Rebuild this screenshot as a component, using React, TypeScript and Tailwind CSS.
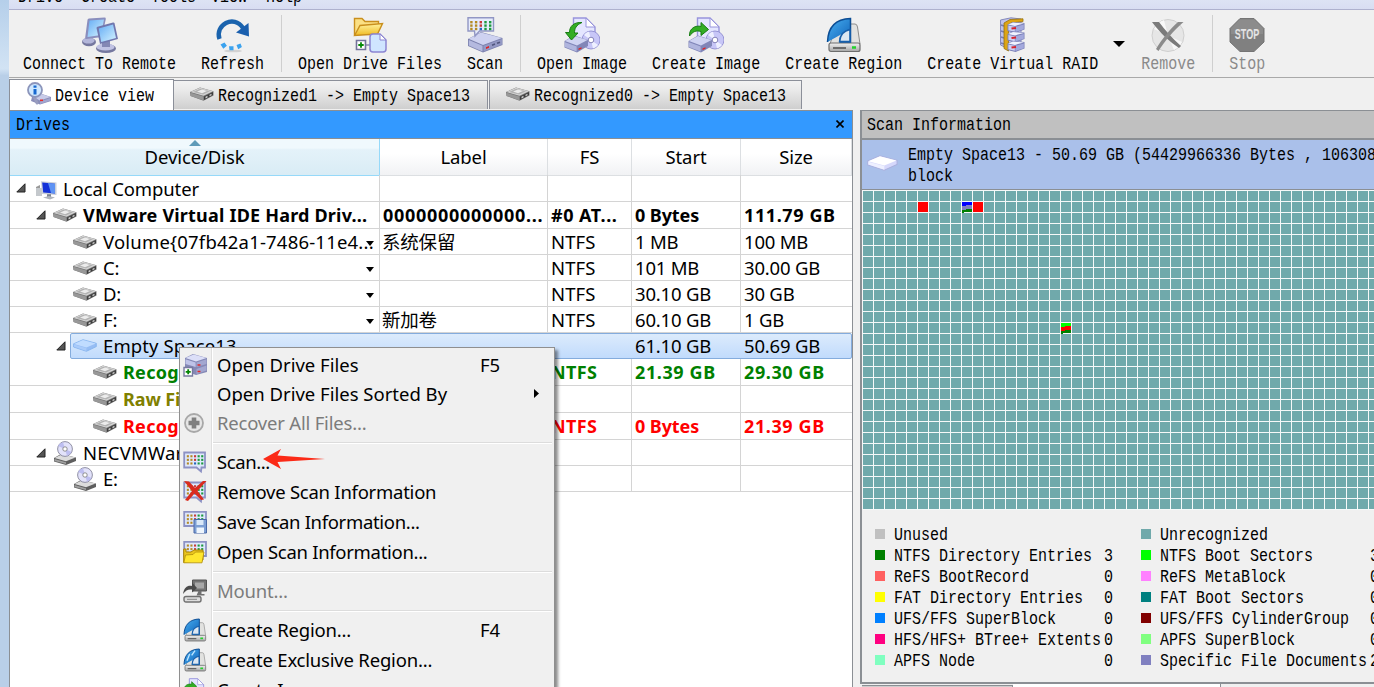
import React from "react";

type IconProps = { className?: string };

const ui = "font-['Noto_Sans','Noto_Sans_CJK_SC',sans-serif]";

function Mono({ children, className = "" }: { children: React.ReactNode; className?: string }) {
  return (
    <span
      className={`inline-block origin-center translate-y-px scale-y-[1.18] whitespace-pre font-['Liberation_Mono','Noto_Sans_CJK_SC',monospace] text-[15px] leading-[21px] ${className}`}
    >
      {children}
    </span>
  );
}

/* ---------- icons ---------- */

function Defs() {
  return (
    <svg className="absolute h-0 w-0" aria-hidden="true">
      <defs>
        <linearGradient id="screen" x1="0" y1="0" x2="1" y2="1">
          <stop offset="0" stopColor="#66adf5" />
          <stop offset="1" stopColor="#d5f3ff" />
        </linearGradient>
        <linearGradient id="gold" x1="0" y1="0" x2="0" y2="1">
          <stop offset="0" stopColor="#fff3a0" />
          <stop offset="1" stopColor="#f0bb22" />
        </linearGradient>
        <linearGradient id="azure" x1="0" y1="0" x2="1" y2="1">
          <stop offset="0" stopColor="#49b0f2" />
          <stop offset="1" stopColor="#0f62b8" />
        </linearGradient>
        <linearGradient id="steel" x1="0" y1="0" x2="0" y2="1">
          <stop offset="0" stopColor="#f2f2f2" />
          <stop offset="1" stopColor="#a5a5a5" />
        </linearGradient>
      </defs>
    </svg>
  );
}

function DriveIcon({ className = "" }: IconProps) {
  return (
    <svg viewBox="0 0 24 14" className={`h-[14px] w-6 ${className}`}>
      <path d="M0 5 L10 .5 L23.5 4.2 V8.5 L13.5 13.8 L0.5 9 Z" fill="#777" />
      <path d="M.5 5 L10 .8 L23 4.3 L13.5 8.8 Z" fill="#d6d6d6" />
      <path d="M3 5 L10.2 1.8 L20 4.3 L13 7.5 Z" fill="#b2b2b2" />
      <path d="M7 4.6 L12 2.5 L17 4 L12 6.2 Z" fill="#ececec" />
      <path d="M.5 5.8 L13.3 9.5 V13.2 L.7 8.9Z" fill="#989898" />
      <path d="M14 9.5 L23 5.1 V8 L14 13Z" fill="#3e3e3e" />
      <path d="M15.5 9.8 l2-1 v1.6 l-2 1z M19.5 7.8 l2-1 v1.4 l-2 1z" fill="#cfcfcf" />
    </svg>
  );
}

function SpaceIcon({ className = "", white = false }: IconProps & { white?: boolean }) {
  return (
    <svg viewBox="0 0 24 13" preserveAspectRatio="none" className={`shrink-0 ${className}`}>
      <path
        d="M.6 4.8 L10 .7 L23.3 4.3 V7.6 L13.4 12.3 L.6 8 Z"
        fill={white ? "#d6d8fb" : "#96bdf4"}
        stroke={white ? "#aab0dd" : "#7fb0ec"}
        strokeWidth=".8"
      />
      <path d="M1 5 L10 1.1 L22.8 4.5 L13.4 8.6 Z" fill={white ? "#ffffff" : "#c0dcff"} />
      <path d="M1 5.4 L13.4 9 V12 L1 7.8Z" fill={white ? "#eef0ff" : "#a9cbfa"} />
    </svg>
  );
}

function ComputerIcon() {
  return (
    <svg viewBox="0 0 22 20" className="relative top-[2px] left-px h-5 w-[22px]">
      <path d="M1 7 L5 5 V16 L1 15Z" fill="#999" />
      <path d="M1 8 h6 v8 h-6z" fill="#c4c8cc" />
      <path d="M6 1.2 L21.5 2.6 V15 L7 14 Z" fill="#c9ced8" />
      <path d="M7.2 2.6 L20 3.7 V13.4 L8.2 12.5Z" fill="#1431d8" />
      <path d="M13 3.1 L20 3.7 V13.4 L16 13Z" fill="#5e93f4" />
      <path d="M12 14.2 h4 v3 h-4z" fill="#7e8590" />
      <path d="M8 17.6 l6-1.6 l6 1.4 l-5 2.2z" fill="#b0b5bc" />
    </svg>
  );
}

function OpticalIcon() {
  return (
    <svg viewBox="0 0 24 24" className="h-6 w-6">
      <path d="M1 17 L8 13 L23 16.5 V20 L13 24 L1 20.5Z" fill="#5e5e5e" />
      <path d="M1.5 17 L9 13.3 L22.5 16.5 L13 20.3Z" fill="#dcdcdc" />
      <path d="M1.5 18 L13 21.2 V23 L1.5 20Z" fill="#a0a0a0" />
      <circle cx="12" cy="8" r="7.4" fill="#e2e2fa" stroke="#85859a" strokeWidth=".9" />
      <path d="M12 8 L5 5 A7 7 0 0 1 10 1.2Z M12 8 L18.5 11 A7 7 0 0 1 14 14.8Z" fill="#bdbef0" />
      <circle cx="12" cy="8" r="2.2" fill="#fff" stroke="#777" strokeWidth=".8" />
    </svg>
  );
}

function RemoteIcon() {
  return (
    <svg viewBox="0 0 36 36" className="h-9 w-9">
      <ellipse cx="7" cy="25" rx="7" ry="4.2" fill="#75789f" />
      <ellipse cx="6.5" cy="23.6" rx="6" ry="3" fill="#b3b6da" />
      <path d="M5.5 3 Q5.5 1.5 7 1.4 L22.5 .6 Q24 .6 23.8 2 L20 20 L4 22 Q3 22 3.2 20.5 Z" fill="#8a8ebd" />
      <path d="M7.5 3.5 L22 2.4 L19 18 L5.5 20 Z" fill="url(#screen)" />
      <ellipse cx="24" cy="31.5" rx="10" ry="4.5" fill="#75789f" />
      <ellipse cx="23.5" cy="30" rx="9" ry="3.6" fill="#c1c3e4" />
      <path d="M20 24 h8 v6 h-8z" fill="#8487b4" />
      <path d="M14.5 11 Q14.5 10 15.5 9.7 L31 5.5 Q32.3 5.2 32.6 6.5 L36 22 L18 27 Z" fill="#7177ae" />
      <path d="M16.7 11.5 L31 7.6 L34 21 L19.2 25 Z" fill="url(#screen)" />
    </svg>
  );
}

function RefreshIcon() {
  return (
    <svg viewBox="0 0 36 36" className="h-9 w-9">
      <ellipse cx="18" cy="34" rx="9" ry="1.3" fill="#d2d2d2" />
      <path d="M4.5 22 C-.5 8 19-3 28 11" fill="none" stroke="#1a63ad" strokeWidth="4.4" />
      <path d="M21 15.5 L33.5 6 L34 19.5 Z" fill="#1a5fae" />
      <path d="M5.5 27.5 l4-2 l2.4 3.2 l-3.6 3z M14 29.2 h4.5 v4 h-4z M21.5 28 l4-1.5 l1.4 3.4 l-3.7 2.4z" fill="#3ba2ee" />
    </svg>
  );
}

function OpenFilesIcon() {
  return (
    <svg viewBox="0 0 36 36" className="h-9 w-9">
      <path d="M2.5 18 V1.5 H10 L13 4.5 H26.5 V8" fill="#fbe084" stroke="#c98f1d" strokeWidth="1.4" />
      <path d="M2.5 18.5 L8 8.5 L30.5 6.5 L25.5 17 Z" fill="url(#gold)" stroke="#c98f1d" strokeWidth="1.4" />
      <path d="M4.5 23.5 h9 v9 h-9z" fill="#fff" stroke="#73739a" strokeWidth="1.6" />
      <path d="M9 25.3 v5.4 M6.3 28 h5.4" stroke="#088a08" strokeWidth="1.8" />
      <path d="M13.5 28 h5" stroke="#73739a" strokeWidth="1.2" />
      <path d="M18 20 q0-3 3-3 h7 l6 6 v9 q0 3-3 3 h-10 q-3 0-3-3z" fill="#cfe5ff" stroke="#8c85d2" strokeWidth="1.5" />
      <path d="M28 17 v6 h6z" fill="#fff" stroke="#8c85d2" strokeWidth="1" />
    </svg>
  );
}

function LilacDrive() {
  return (
    <>
      <path d="M1 22 L14 15 L35.5 21 V28 L16 35.5 L1 29 Z" fill="#7b80ad" />
      <path d="M1.5 21.8 L14 15.4 L35 21 L16 28Z" fill="#ced2f0" />
      <path d="M1.8 23 L15.5 28.8 V34.4 L1.8 28.6Z" fill="#b4b9df" />
      <path d="M16.5 28.8 L35 22 V27.6 L16.5 34.6Z" fill="#9398c4" />
    </>
  );
}

function Dots({ x, y, dx = 4, dy = 3.4, s = 2.2 }: { x: number; y: number; dx?: number; dy?: number; s?: number }) {
  const colors = ["#b58a24", "#b58a24", "#c83a3a", "#1d9a3e", "#1d9a3e"];
  return (
    <>
      {[0, 1, 2].map((r) =>
        colors.map((c, i) => (
          <rect key={`${r}-${i}`} x={x + i * dx} y={y + r * dy} width={s} height={s} fill={r === 2 && i === 2 ? "#2767b9" : c} />
        )),
      )}
    </>
  );
}

function ScanIcon() {
  return (
    <svg viewBox="0 0 36 36" className="h-9 w-9">
      <LilacDrive />
      <path d="M19 30.3 l3-1.2 v1.6 l-3 1.2z" fill="#e02020" />
      <path d="M25 28.2 l3-1.1 M30 26.3 l3-1.1" stroke="#51567d" strokeWidth="1.6" />
      <path d="M1 .8 H26.5 V14 H12.5 L8 19 L7.5 14 H1 Z" fill="#e6ecfc" stroke="#9196c4" strokeWidth="1.4" />
      <Dots x={3.2} y={4} dx={4.7} dy={3.4} s={2.4} />
    </svg>
  );
}

function ImageIcon({ out = false, className = "h-9 w-9" }: IconProps & { out?: boolean }) {
  return (
    <svg viewBox="0 0 36 36" className={className}>
      <path d="M9.5 1 h12.5 l9 9 v18 h-21.5z" fill="#e4e6ff" stroke="#9894dc" strokeWidth="1.4" />
      <path d="M22 1 v9 h9z" fill="#fff" stroke="#9894dc" strokeWidth="1" />
      <circle cx="27" cy="23" r="9" fill="#c7c6f7" stroke="#8f8cd0" strokeWidth=".9" />
      <path d="M27 23 L20 18 A9 9 0 0 1 25 14.5Z M27 23 L34 28 A9 9 0 0 1 29 31.5Z" fill="#eef0ff" />
      <circle cx="27" cy="23" r="2.8" fill="#fff" stroke="#8583b9" />
      <path d="M.5 24 L10 18.5 L24 23 V29 L13 35.5 L.5 30.5Z" fill="#8186b8" />
      <path d="M1 24 L10 19 L23.5 23 L13 28.5Z" fill="#cfd3f2" />
      <path d="M1 25.2 L12.6 29.6 V34.6 L1 30Z" fill="#b0b5de" />
      <path d="M14.5 31.5 l3-1.3 v1.5 l-3 1.4z" fill="#e32222" />
      {out ? (
        <path d="M1.5 19 C1 11 8 8 13 9.5 V5.5 L20.5 12.5 L13 18.5 V14.5 C8 13 5 14.5 1.5 19Z" fill="#33ad25" stroke="#187c14" />
      ) : (
        <path d="M18 5.5 C10 5 5.5 9 5.5 15.5 H1.5 L7.5 23 L14 16 H10.5 C10.5 11.5 12 8 18 5.5Z" fill="#33ad25" stroke="#187c14" />
      )}
    </svg>
  );
}

function RegionIcon({ className = "h-9 w-9", striped = false }: IconProps & { striped?: boolean }) {
  return (
    <svg viewBox="0 0 36 36" className={className}>
      <path d="M22 7 h7 q2 0 2.5 3 L34 27 H4 L7 18Z" fill="#e2e2e0" stroke="#8c8c8c" />
      <rect x="3" y="26" width="31" height="8.5" rx="2" fill="url(#steel)" stroke="#6d6d6d" strokeWidth="1.2" />
      <path d="M7 31 h13" stroke="#565656" strokeWidth="1.6" />
      <path d="M26 30.5 h4" stroke="#23d12c" strokeWidth="2.5" />
      <path d="M1.5 25 C2 10 10 2 24.5 1.5 V25 H14 C14 18 17 15 23 13" fill="url(#azure)" stroke="#0c4d94" strokeWidth="1.5" />
      <path d="M24 12.5 C17 14 14 18 13.6 24.5 H24Z" fill="#dce7f2" stroke="#165fac" strokeWidth="1.6" />
      {striped && <path d="M6 19 L10 9 M13 11 L18 4" stroke="#bfe5ff" strokeWidth="2" />}
    </svg>
  );
}

function RaidIcon() {
  return (
    <svg viewBox="0 0 28 36" className="h-9 w-7">
      <path d="M1.5 3 L12 .8 L22 2 V30 L12 33 L1.5 28Z" fill="#bfc3ec" stroke="#858abb" />
      <path d="M2 8 l3 1 M2 14 l3 1 M2 20 l3 1 M2 26 l3 1" stroke="#777cae" strokeWidth="1.5" />
      <path d="M5 6 L11 2.5 L24 1.8 V4.6 L12 6 L9.5 8 V34 L5 31.5Z" fill="#dda514" stroke="#96700c" strokeWidth=".8" />
      {[6, 15.5, 25].map((y) => (
        <g key={y}>
          <path d={`M8.5 ${y + 1.5} l5-2.5 l12 1 v6.5 l-9 3.5 l-8-2z`} fill="#7b80b8" />
          <path d={`M9 ${y + 1.5} l5-2 l11 .9 l-9 2.5z`} fill="#f0f2ff" />
          <path d={`M9.4 ${y + 2.6} l6.4 1.2 v5 l-6.4-1.5z`} fill="#ccd0f4" />
          <path d={`M16.4 ${y + 3.8} l8.4-2.4 v4.8 l-8.4 2.8z`} fill="#a3a9dd" />
          <path d={`M12.5 ${y + 5.5} l4.5-.6`} stroke="#d8232e" strokeWidth="2" />
        </g>
      ))}
    </svg>
  );
}

function RemoveIcon() {
  return (
    <svg viewBox="0 0 36 36" className="h-9 w-9">
      <circle cx="18" cy="18.5" r="16" fill="#e6e6e6" stroke="#cfcfcf" />
      <path d="M18 18.5 L4 12 A16 16 0 0 1 14 3Z M18 18.5 L32 25 A16 16 0 0 1 24 33Z" fill="#f8f8f8" />
      <path d="M2 5 L9 5 C15 13 23 22 31 29 L29 31 C20 25 10 16 2 5Z" fill="#7b7b7b" />
      <path d="M33.5 5 L28 5 C20 12 12 22 6 32 L8.5 34 C15 24 23 14 33.5 5Z" fill="#8b8b8b" />
    </svg>
  );
}

function StopIcon() {
  return (
    <svg viewBox="0 0 36 36" className="h-9 w-9">
      <path d="M11 1.5 H25 L35 11.5 V25 L25 34.5 H11 L1 25 V11.5Z" fill="#808080" stroke="#757575" />
      <path d="M11 2.5 H25 L34 11.5 V17 H2 V11.5Z" fill="#8c8c8c" />
      <text
        transform="translate(18 22) scale(.72 1.15)"
        textAnchor="middle"
        fontFamily="Liberation Sans"
        fontWeight="bold"
        fontSize="12.5"
        fill="#e4e4e4"
      >
        STOP
      </text>
    </svg>
  );
}

function DeviceViewIcon() {
  return (
    <svg viewBox="0 0 24 24" className="relative -top-px left-px h-6 w-6">
      <path d="M5 15 L12 11 L24 15 V19 L13 22.5 L4 19Z" fill="#8a8eb9" />
      <path d="M6 15 L13 11.5 L23.5 15 L13 18.5Z" fill="#c8cbe8" />
      <path d="M13 19.5 L23.5 16 V18.5 L13 22Z" fill="#a2a6cf" />
      <path d="M13 17.5 h3 v1.6 h-3z" fill="#e62c2c" />
      <path d="M7 14 L10 21" stroke="#999dbf" strokeWidth="3" strokeLinecap="round" />
      <circle cx="8" cy="8" r="7" fill="#cfe8ff" stroke="#8c95bb" strokeWidth="1.8" />
      <path d="M8 3.6 v2.2 M8 7 v5.4" stroke="#1668d0" strokeWidth="3" />
    </svg>
  );
}

function MenuDriveIcon() {
  return (
    <svg viewBox="0 0 24 24" className="h-6 w-6">
      <path d="M2 5 L10 1 L24 5 V19 L13 22 L2 18Z" fill="#8589b6" />
      <path d="M2.5 5 L10.5 1.4 L23.5 5 L13 8.4Z" fill="#dcdff8" />
      <path d="M2.5 6.3 L12.6 9.6 V14 L2.5 11Z" fill="#bfc3e8" />
      <path d="M13.5 9.6 L23.5 6.2 V11 L13.5 14Z M13.5 16 L23.5 12.6 V17.6 L13.5 21Z" fill="#a3a7d0" />
      <path d="M14.5 12 h3 M14.5 18.5 h3" stroke="#e22a2a" strokeWidth="1.6" />
      <path d="M1 14.5 h8.5 v8.5 h-8.5z" fill="#fff" stroke="#777aa0" strokeWidth="1.4" />
      <path d="M5.2 16.3 v5 M2.7 18.8 h5" stroke="#058505" strokeWidth="1.8" />
    </svg>
  );
}

function PlusCircleIcon() {
  return (
    <svg viewBox="0 0 24 24" className="relative -left-px h-6 w-6">
      <circle cx="12" cy="12" r="9" fill="#e6e6e6" stroke="#a8a8a8" strokeWidth="1.8" />
      <path d="M12 6.5 v11 M6.5 12 h11" stroke="#808080" strokeWidth="4.6" />
    </svg>
  );
}

function BubbleIcon({ variant = "plain" }: { variant?: "plain" | "remove" | "save" | "open" }) {
  const bubble = variant === "plain" || variant === "remove";
  return (
    <svg viewBox="0 0 24 24" className="h-6 w-6">
      <path
        d={bubble ? "M1.2 2.5 H22 V17.5 H18.5 L18 21.5 L13.5 17.5 H1.2Z" : "M1.2 1.8 H23 V16 H1.2Z"}
        fill="#dfe8fc"
        stroke="#8d92c4"
        strokeWidth="1.8"
      />
      <Dots x={3.8} y={bubble ? 5.2 : 4.5} dx={3.6} dy={3.6} s={2.1} />
      {variant === "remove" && (
        <path d="M1 1 L6 1.5 L12 8 L20 1 L23.5 1 L14.5 11 L21 19.5 L18 20 L11.5 13.5 L5 21 L2 20 L9 11Z" fill="#d92b1e" />
      )}
      {variant === "save" && (
        <>
          <path d="M11 9.5 h12.5 v13.5 h-12.5z" fill="#7d9fd4" stroke="#4a69a8" />
          <path d="M13.5 10 h7 v5 h-7z" fill="#dbe9f8" />
          <path d="M13.5 17.5 h7.5 v5.5 h-7.5z" fill="#eef5fc" />
        </>
      )}
      {variant === "open" && (
        <>
          <path d="M.7 22.5 V9 H3 V12 H8 L11 10 H20 V20Z" fill="#eac51d" stroke="#a98306" />
          <path d="M.8 22.8 L2.5 15 L10 14.5 L12.5 12 L21 12 L19 22.8Z" fill="#ffe62e" stroke="#ae8b0b" strokeWidth=".8" />
        </>
      )}
    </svg>
  );
}

function MountIcon() {
  return (
    <svg viewBox="0 0 24 24" className="h-6 w-6">
      <path d="M9.5 1 h14 v11 h-14z" fill="#747474" stroke="#555" />
      <path d="M12 3.5 h9 v6 h-9z" fill="#a8a8a8" />
      <path d="M15.5 12 h3 v3 h3 v1.5 h-8z" fill="#707070" />
      <path d="M0 15 C1 8 5 6 9 7 V3.5 L14 9 L9 13.5 V10.5 C5 10 3 11 0 15Z" fill="#4b4b4b" />
      <rect x="1" y="17.5" width="17" height="5.5" rx="2" fill="#ddd" stroke="#707070" strokeWidth="1.4" />
      <path d="M4 20.3 h10" stroke="#888" />
    </svg>
  );
}

function Expander() {
  return (
    <svg viewBox="0 0 10 10" className="h-[10px] w-[10px]">
      <path d="M9 .8 V9 H.8Z" fill="#555" stroke="#222" strokeWidth="1" />
    </svg>
  );
}

function DownArrow({ className = "h-[5px] w-2" }: IconProps) {
  return (
    <svg viewBox="0 0 12 6" preserveAspectRatio="none" className={className}>
      <path d="M0 0 H12 L6 6Z" fill="#000" />
    </svg>
  );
}

/* ---------- toolbar ---------- */

function Tool({ icon, label, gap, disabled = false }: { icon: React.ReactNode; label: string; gap: string; disabled?: boolean }) {
  return (
    <div className={`flex flex-col items-center pt-[7px] ${gap}`}>
      {icon}
      <Mono className={disabled ? "text-[#8a8a8a]" : "text-black"}>{label}</Mono>
    </div>
  );
}

function ToolSeparator({ gap }: { gap: string }) {
  return <div className={`mt-[5px] h-[57px] w-px bg-[#cfcfcf] ${gap}`} />;
}

function Toolbar() {
  return (
    <div className="flex h-[68px] shrink-0 border-b border-[#a9a9a9] bg-[#f0f0f0]">
      <Tool icon={<RemoteIcon />} label="Connect To Remote" gap="ml-[14px]" />
      <Tool icon={<RefreshIcon />} label="Refresh" gap="ml-[25px]" />
      <ToolSeparator gap="ml-[17px]" />
      <Tool icon={<OpenFilesIcon />} label="Open Drive Files" gap="ml-4" />
      <Tool icon={<ScanIcon />} label="Scan" gap="ml-[25px]" />
      <ToolSeparator gap="ml-[17px]" />
      <Tool icon={<ImageIcon />} label="Open Image" gap="ml-4" />
      <Tool icon={<ImageIcon out />} label="Create Image" gap="ml-[25px]" />
      <Tool icon={<RegionIcon />} label="Create Region" gap="ml-[25px]" />
      <Tool icon={<RaidIcon />} label="Create Virtual RAID" gap="ml-[25px]" />
      <DownArrow className="mt-[31px] ml-[15px] h-[6px] w-3" />
      <Tool icon={<RemoveIcon />} label="Remove" gap="ml-4" disabled />
      <ToolSeparator gap="ml-[17px]" />
      <Tool icon={<StopIcon />} label="Stop" gap="ml-4" disabled />
    </div>
  );
}

function Tabs() {
  return (
    <div className="flex h-8 shrink-0 items-end bg-[#f0f0f0]">
      <div className="flex h-[31px] w-[165px] items-center border border-b-0 border-[#8b8f99] bg-white pl-4">
        <DeviceViewIcon />
        <Mono className="ml-[5px]">Device view</Mono>
      </div>
      {["Recognized1 -> Empty Space13", "Recognized0 -> Empty Space13"].map((t, i) => (
        <div
          key={t}
          className={`mb-px flex h-[29px] items-center border-t border-r border-[#8b8f99] bg-linear-to-b from-[#f2f2f2] from-0% via-[#e9e9e9] via-35% to-[#cfcfcf] to-100% pl-4 ${i ? "ml-px w-[313px] border-l" : "w-[314px]"}`}
        >
          <DriveIcon className="-translate-y-px" />
          <Mono className="ml-1">{t}</Mono>
        </div>
      ))}
    </div>
  );
}

/* ---------- drive tree ---------- */

type Row = {
  h: string;
  pad: string;
  open?: boolean;
  icon: React.ReactNode;
  name: string;
  menu?: boolean;
  cells: string[];
  style?: string;
  selected?: boolean;
  nameFit?: string;
};

const rows: Row[] = [
  { h: "h-[27px]", pad: "pl-[6px]", open: true, icon: <ComputerIcon />, name: "Local Computer", nameFit: "pt-px tracking-[-0.1px]", cells: ["", "", "", ""] },
  { h: "h-[27px]", pad: "pl-[26px]", open: true, icon: <DriveIcon />, name: "VMware Virtual IDE Hard Driv...", nameFit: "tracking-[0.2px]", cells: ["0000000000000...", "#0 AT...", "0 Bytes", "111.79 GB"], style: "font-bold" },
  { h: "h-[26px]", pad: "pl-[46px]", icon: <DriveIcon />, name: "Volume{07fb42a1-7486-11e4...", nameFit: "tracking-[0.2px]", menu: true, cells: ["系统保留", "NTFS", "1 MB", "100 MB"] },
  { h: "h-[26px]", pad: "pl-[46px]", icon: <DriveIcon />, name: "C:", menu: true, cells: ["", "NTFS", "101 MB", "30.00 GB"] },
  { h: "h-[26px]", pad: "pl-[46px]", icon: <DriveIcon />, name: "D:", menu: true, cells: ["", "NTFS", "30.10 GB", "30 GB"] },
  { h: "h-[26px]", pad: "pl-[46px]", icon: <DriveIcon />, name: "F:", menu: true, cells: ["新加卷", "NTFS", "60.10 GB", "1 GB"] },
  { h: "h-[26px]", pad: "pl-[46px]", open: true, icon: <SpaceIcon className="h-[13px] w-6" />, name: "Empty Space13", nameFit: "tracking-[0.1px]", cells: ["", "", "61.10 GB", "50.69 GB"], selected: true },
  { h: "h-[27px]", pad: "pl-[66px]", icon: <DriveIcon />, name: "Recognized0", nameFit: "tracking-[0.3px]", cells: ["", "NTFS", "21.39 GB", "29.30 GB"], style: "font-bold text-[#008000]" },
  { h: "h-[27px]", pad: "pl-[66px]", icon: <DriveIcon />, name: "Raw Files", cells: ["", "", "", ""], style: "font-bold text-[#808000]" },
  { h: "h-[27px]", pad: "pl-[66px]", icon: <DriveIcon />, name: "Recognized1", nameFit: "tracking-[0.3px]", cells: ["", "NTFS", "0 Bytes", "21.39 GB"], style: "font-bold text-[#ff0000]" },
  { h: "h-[26px]", pad: "pl-[26px]", open: true, icon: <OpticalIcon />, name: "NECVMWar", nameFit: "tracking-[0.2px]", cells: ["", "", "", ""] },
  { h: "h-[26px]", pad: "pl-[46px]", icon: <OpticalIcon />, name: "E:", cells: ["", "", "", ""] },
];

const cols = "grid grid-cols-[370px_168px_84px_109px_111px]";

function cellFit(text: string, isBold: boolean) {
  if (!isBold) return text === "NTFS" ? "tracking-[0.1px]" : "";
  if (text.startsWith("000")) return "tracking-[0.7px]";
  if (text.endsWith("GB")) return "tracking-[0.6px]";
  if (text.startsWith("#")) return "tracking-[0.5px]";
  if (text === "NTFS") return "tracking-[0.4px]";
  return "";
}

function TreeRow({ r }: { r: Row }) {
  const line = r.selected ? "border-transparent" : "border-[#d4d4d4]";
  const tone = r.style ?? "";
  const size = tone ? "text-[18px] tracking-[-0.1px]" : "text-[18.5px] tracking-[-0.2px]";
  return (
    <div className={`${cols} ${r.h} ${size} relative ${tone} leading-[22px] whitespace-nowrap`}>
      {r.selected && (
        <div className="absolute inset-y-0 right-0 left-[60px] rounded-[2px] border border-[#84acdd] bg-linear-to-b from-[#dcebfc] to-[#c1dbfc]" />
      )}
      <div className={`relative flex items-center border-r border-b ${line} ${r.pad}`}>
        <div className="w-[17px]">{r.open && <Expander />}</div>
        <div className="flex w-6 justify-center">{r.icon}</div>
        <span className={`ml-[6px] ${r.nameFit ?? ""}`}>{r.name}</span>
        {r.menu && <DownArrow className="absolute top-[12px] right-[5px] h-[5px] w-2" />}
      </div>
      {r.cells.map((c, i) => (
        <div key={i} className={`relative flex items-center overflow-hidden border-b ${i === 0 && !tone ? "pl-[2px]" : "pl-[3px]"} ${line} ${i < 3 ? "border-r" : ""}`}>
          <span className={cellFit(c, tone !== "")}>{c}</span>
        </div>
      ))}
    </div>
  );
}

function DrivesPanel() {
  return (
    <div className="flex w-[844px] shrink-0 flex-col border-t border-r border-l border-[#8b8f94] bg-white">
      <div className="flex h-7 shrink-0 items-center justify-between border-b border-[#8b8f94] bg-[#3399ff] pr-2 pl-[6px]">
        <Mono>Drives</Mono>
        <svg viewBox="0 0 8 8" className="-mt-[2px] h-2 w-2">
          <path d="M.5 .5 L7.5 7.5 M7.5 .5 L.5 7.5" stroke="#000" strokeWidth="1.6" />
        </svg>
      </div>
      <div className={`${ui} flex flex-col`}>
        <div className={`${cols} h-9 text-center text-[18.5px] leading-[36px] tracking-[-0.1px]`}>
          <div className="relative border-r border-b border-[#96d9f9] bg-linear-to-b from-[#f0f9fd] from-25% via-[#e4f2f9] via-30% to-[#d9ecf5]">
            Device/Disk
            <svg viewBox="0 0 12 6" className="absolute top-[1px] left-[179px] h-[6px] w-3">
              <path d="M0 6 L6 0 L12 6Z" fill="#5f9bb8" />
            </svg>
          </div>
          {["Label", "FS", "Start", "Size"].map((h) => (
            <div key={h} className="border-r border-b border-[#dcdfe2] bg-linear-to-b from-white from-40% to-[#f1f2f4]">
              {h}
            </div>
          ))}
        </div>
        {rows.map((r, i) => (
          <TreeRow key={i} r={r} />
        ))}
      </div>
    </div>
  );
}

/* ---------- scan information ---------- */

const legend: [string, string, string, string, string, string][] = [
  ["bg-[#c0c0c0]", "Unused", "", "bg-[#70a9ab]", "Unrecognized", ""],
  ["bg-[#008000]", "NTFS Directory Entries", "3", "bg-[#00ff00]", "NTFS Boot Sectors", "3"],
  ["bg-[#ff6060]", "ReFS BootRecord", "0", "bg-[#ff80ff]", "ReFS MetaBlock", "0"],
  ["bg-[#ffff00]", "FAT Directory Entries", "0", "bg-[#008080]", "FAT Boot Sectors", "0"],
  ["bg-[#0080ff]", "UFS/FFS SuperBlock", "0", "bg-[#800000]", "UFS/FFS CylinderGroup", "0"],
  ["bg-[#ff0080]", "HFS/HFS+ BTree+ Extents", "0", "bg-[#80ff80]", "APFS SuperBlock", "0"],
  ["bg-[#80ffc0]", "APFS Node", "0", "bg-[#8080c0]", "Specific File Documents", "2"],
];

const COLS = 47;
const ROWS = 29;

function BlockCell({ i }: { i: number }) {
  const row = Math.floor(i / COLS);
  const col = i % COLS;
  if (row === 1 && (col === 5 || col === 10)) return <div className="bg-[#ff0000]" />;
  const mixed = (row === 1 && col === 9) || (row === 12 && col === 18);
  if (!mixed) return <div className="bg-[#70a9ab]" />;
  const colors = row === 1 ? ["#0000ff", "#8080c0", "#008000"] : ["#00ff00", "#ff0000", "#008000"];
  return (
    <svg viewBox="0 0 10 11" className="h-[11px] w-[10px]">
      <rect width="10" height="10" fill={colors[1]} />
      <path d="M0 0 H10 V3 H4 V4 H0Z" fill={colors[0]} />
      <path d="M0 8 H4 V7 H10 V10 H2 V11 H0Z" fill={colors[2]} />
    </svg>
  );
}

function ScanPanel() {
  return (
    <div className="ml-[7px] flex min-w-0 flex-1 flex-col overflow-hidden">
      <div className="flex h-[574px] shrink-0 flex-col border-t border-b-2 border-l-2 border-[#8b8f94]">
        <div className="flex h-[29px] shrink-0 items-center border-b-2 border-[#8b8f94] bg-[#c0c0c0] pl-[5px]">
          <Mono>Scan Information</Mono>
        </div>
        <div className="flex h-[50px] shrink-0 items-center border-b border-[#8b8f94] bg-[#aac0ea] pl-[5px]">
          <SpaceIcon white className="-mt-1 h-4 w-[31px]" />
          <div className="ml-[10px] flex flex-col">
            <Mono>Empty Space13 - 50.69 GB (54429966336 Bytes , 106308</Mono>
            <Mono>block</Mono>
          </div>
        </div>
        <div className="grid w-[519px] shrink-0 auto-rows-[10px] grid-cols-[repeat(47,10px)] gap-px bg-[#f6f8f8] py-px pl-px">
          {Array.from({ length: COLS * ROWS }, (_, i) => (
            <BlockCell key={i} i={i} />
          ))}
        </div>
        <div className="flex flex-col pt-[14px]">
          {legend.map(([c1, l1, v1, c2, l2, v2]) => (
            <div key={l1} className="flex h-[21px] items-center pl-[13px] whitespace-nowrap">
              <div className={`-mt-px h-[10px] w-[10px] shrink-0 ${c1}`} />
              <div className="ml-[9px] flex w-[210px] shrink-0">
                <Mono>{l1}</Mono>
              </div>
              <div className="flex w-[37px] shrink-0">
                <Mono>{v1}</Mono>
              </div>
              <div className={`-mt-px h-[10px] w-[10px] shrink-0 ${c2}`} />
              <div className="ml-[9px] flex w-[210px] shrink-0">
                <Mono>{l2}</Mono>
              </div>
              <Mono>{v2}</Mono>
            </div>
          ))}
        </div>
      </div>
      <div className="flex flex-1">
        <div className="mt-px ml-[2px] w-[151px] border-t border-r border-[#8b8f94] bg-[#cdcdcd]" />
        <div className="w-[208px] border-r border-[#8b8f94] bg-white" />
      </div>
    </div>
  );
}

/* ---------- context menu ---------- */

type Item = { icon?: React.ReactNode; label: string; hint?: string; sub?: boolean; off?: boolean; mark?: boolean; h?: string; fit?: string };

const menu: (Item | null)[] = [
  { icon: <MenuDriveIcon />, label: "Open Drive Files", hint: "F5", h: "h-[29px]", fit: "tracking-[0px]" },
  { label: "Open Drive Files Sorted By", sub: true, h: "h-[29px]", fit: "tracking-[0px]" },
  { icon: <PlusCircleIcon />, label: "Recover All Files...", off: true, h: "h-[29px]" },
  null,
  { icon: <BubbleIcon />, label: "Scan...", mark: true, fit: "tracking-[-0.4px]" },
  { icon: <BubbleIcon variant="remove" />, label: "Remove Scan Information", fit: "tracking-[-0.25px]" },
  { icon: <BubbleIcon variant="save" />, label: "Save Scan Information...", fit: "tracking-[-0.32px]" },
  { icon: <BubbleIcon variant="open" />, label: "Open Scan Information...", fit: "tracking-[-0.3px]" },
  null,
  { icon: <MountIcon />, label: "Mount...", off: true },
  null,
  { icon: <RegionIcon className="h-6 w-6" />, label: "Create Region...", hint: "F4" },
  { icon: <RegionIcon striped className="h-6 w-6" />, label: "Create Exclusive Region..." },
  { icon: <ImageIcon out className="h-6 w-6" />, label: "Create Image..." },
];

function ContextMenu() {
  return (
    <div
      className={`${ui} absolute top-[347px] left-[179px] h-[360px] w-[376px] border border-[#8f8f8f] bg-[#f0f0f0] px-[2px] pt-[2px] text-[18.5px] tracking-[-0.2px] shadow-[3px_3px_3px_rgba(0,0,0,0.45)]`}
    >
      <div className="absolute inset-y-0 left-[31px] w-[2px] border-r border-l border-r-white border-l-[#dedede]" />
      {menu.map((m, i) =>
        m ? (
          <div key={i} className={`relative flex items-center leading-[24px] whitespace-nowrap ${m.h ?? "h-[30px]"} ${m.off ? "text-[#7c7c7c]" : "text-black"}`}>
            <div className="w-[35px] shrink-0 pl-px">{m.icon}</div>
            <span className={m.fit ?? ""}>{m.label}</span>
            {m.hint && <span className="absolute left-[298px]">{m.hint}</span>}
            {m.sub && (
              <svg viewBox="0 0 5 9" className="absolute left-[352px] h-[9px] w-[5px]">
                <path d="M0 0 L5 4.5 L0 9Z" fill="#000" />
              </svg>
            )}
            {m.mark && (
              <svg viewBox="0 0 62 20" className="absolute top-[2px] left-[81px] h-5 w-[62px]">
                <path d="M0 10 L18 0 L14.5 6.5 L62 10 L14.5 13 L18 20Z" fill="#fb2a17" />
              </svg>
            )}
          </div>
        ) : (
          <div key={i} className={`flex items-center pl-[31px] ${i === 3 ? "h-[10px] pt-px" : "h-[9px]"}`}>
            <div className="h-[2px] flex-1 border-t border-b border-t-[#dcdcdc] border-b-white" />
          </div>
        ),
      )}
    </div>
  );
}

export default function App() {
  return (
    <div className="relative flex h-[687px] w-[1374px] overflow-hidden bg-[#f0f0f0] text-black">
      <Defs />
      <div className="w-[9px] shrink-0 bg-linear-to-b from-[#b5cfea] from-0% via-[#d2e3f4] via-10% to-[#b9cfe8] to-11%" />
      <div className="flex min-w-0 flex-1 flex-col">
        <div className="relative h-[10px] shrink-0 overflow-hidden border-b border-[#aeb1ce] bg-linear-to-b from-[#dde3f4] to-[#d8ddf2]">
          <div className="-mt-[14px] flex pl-[9px]">
            <Mono className="w-[63px]">Drive</Mono>
            <Mono className="w-[70px]">Create</Mono>
            <Mono className="w-[60px]">Tools</Mono>
            <Mono className="w-[55px]">View</Mono>
            <Mono>Help</Mono>
          </div>
        </div>
        <Toolbar />
        <Tabs />
        <div className="flex min-h-0 flex-1">
          <DrivesPanel />
          <ScanPanel />
        </div>
      </div>
      <ContextMenu />
    </div>
  );
}
